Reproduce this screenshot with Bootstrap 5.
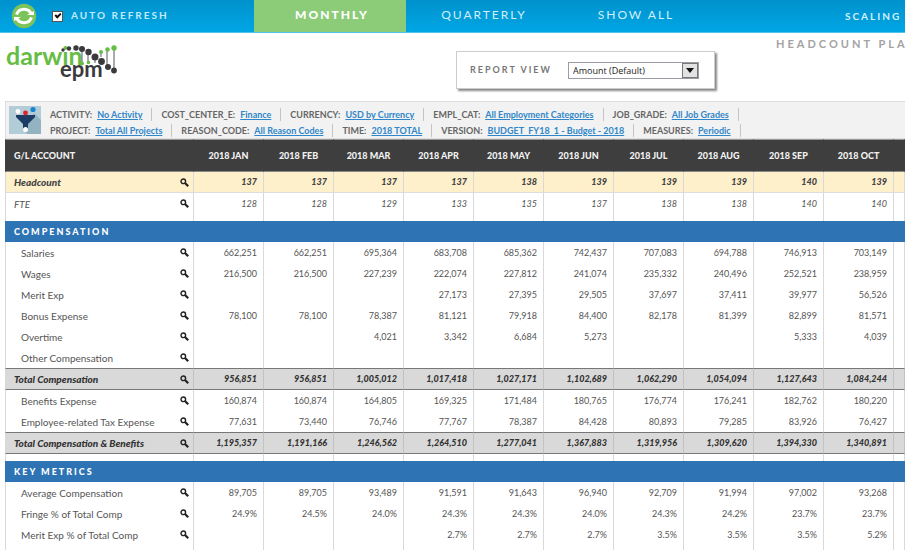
<!DOCTYPE html>
<html lang="en">
<head>
<meta charset="utf-8">
<meta name="viewport" content="width=device-width, initial-scale=1">
<title>Headcount Planning</title>
<link href="https://cdn.jsdelivr.net/npm/bootstrap@5.3.0/dist/css/bootstrap.min.css" rel="stylesheet">
<style>
body{font-family:"Century Gothic",Lato,"Liberation Sans",sans-serif;font-size:10px;line-height:16px;color:#555;overflow:hidden}
.topbar{height:33px;background:linear-gradient(#0092cd,#00a6e4);border-bottom:1px solid #4fc1ee}
.topbar-start{flex:0 0 254px;padding-left:11px;gap:15px}
.refresh-label{font-size:10px;letter-spacing:2px;color:#c3eafa;font-weight:700;padding-bottom:3px}
.tick{appearance:none;width:11px;height:11px;margin:0;border:1px solid #555;background:#fff;display:grid;place-items:center}
.tick:checked::after{content:"";width:6px;height:4px;border:solid #111;border-width:0 0 2px 2px;transform:rotate(-45deg);margin-top:-2px}
.tab-link{flex:0 0 152px;font-size:12px;letter-spacing:2px;color:#d2effa;text-decoration:none;padding:0 0 2px 4px}
.tab-link.active{background:#8ccb78;color:#fff;font-weight:900}
.scaling{margin-left:135px;font-size:10px;letter-spacing:2px;color:#d2effa;padding-bottom:1px;font-weight:700}
.masthead{height:68px}
.brand-art{margin:6px 0 0 5px}
.report-box{margin:18px 0 0 338px;height:38px;width:259px;border:1px solid #ccc;box-shadow:2px 2px 2px #888;padding:0 15px 0 13px}
.report-label{font-size:9px;letter-spacing:2px;font-weight:700;color:#777}
.view-wrap{width:131px;height:17px;border:1px solid #9a9da3}
.view-select{appearance:none;border:0;padding:0 0 0 4px;font:9px/15px "Open Sans",sans-serif;color:#222;background:#fff}
.view-arrow{width:16px;border:1px solid #777;background:#e2e2e2;pointer-events:none}
.page-name{margin:4px 0 0 61px;font-size:11px;letter-spacing:3px;font-weight:700;color:#a3a3a3}
.filterbar{margin-left:5px;height:38px;border:1px solid #ddd;border-right:0;background:#f2f2f2;padding:4px 0 0 3px;gap:9px}
.filter-line{height:16px;align-items:center}
.filter-item{padding-right:9px;margin-right:9px;border-right:1px solid #c4c4c4;line-height:13px;gap:5px;color:#666;font-size:9px;font-weight:700}
.filter-item a{color:#2f86c9;text-decoration:underline}
.ledger{margin-left:5px}
.ledger table{table-layout:fixed;border-collapse:separate;border-spacing:0}
.ledger th,.ledger td{height:21px;padding:0;border:0 solid #d9d9d9;border-right-width:1px;white-space:nowrap;vertical-align:middle;line-height:12px}
.ledger th:first-child{border-left-width:1px}
.ledger .c-name{width:189px}.ledger .c-month{width:70px}
.ledger td{font-size:9px;text-align:right;padding-right:6px}
.ledger tbody th{font-weight:400;padding:0 3px 0 15px}
.ledger thead th{height:33px;background:#3e3e3e;color:#f2f2f2;border-color:#3e3e3e;border-bottom:1px solid #888;border-top:1px solid #999;text-align:center;font-size:9px;font-weight:900}
.ledger thead th:first-child{text-align:left;padding-left:8px}
.ledger .kpi>*,.ledger .kpi-light>*{font-style:italic;border-bottom:1px solid #ddd}
.ledger .kpi-light>*{border-bottom:0}
.ledger .kpi>*{background:#fff0cc;font-weight:900;color:#444}
.ledger .kpi th,.ledger .kpi-light th,.ledger .sum th{padding-left:8px}
.ledger .sum>*{height:22px;background:#d9d9d9;font-style:italic;font-weight:900;color:#333;border-top:1px solid #777;border-bottom:1px solid #777;border-right-color:#c2c2c2}
.ledger .spacer>*{height:7px;line-height:0}
.ledger .band th{background:#2e74b5;color:#fff;font-size:9px;font-weight:900;letter-spacing:2px;padding-left:8px;border-color:#2e74b5}
.lens{width:10px;height:12px;color:#222}
.lens svg{width:9px;height:9px;display:block}
</style>
</head>
<body class="bg-white">
<svg width="0" height="0" class="d-none"><symbol id="lens" viewBox="0 0 9 9"><circle cx="3.3" cy="3.3" r="2.3" fill="none" stroke="currentColor" stroke-width="1.4"/><path d="M5 5L8.2 8.2" stroke="currentColor" stroke-width="2.2"/></symbol></svg>
<header>
<nav class="topbar d-flex align-items-stretch overflow-hidden text-nowrap">
  <div class="topbar-start d-flex align-items-center">
    <button class="btn p-0 border-0 d-flex rounded-circle" aria-label="Refresh"><svg width="26" height="26" viewBox="0 0 26 26"><circle cx="13" cy="13" r="12.2" fill="#7cc35b"/><g fill="none" stroke="#fff" stroke-width="3"><path d="M5.500 11.500A8 8 0 0 1 20.500 11.500"/><path d="M20.500 14.500A8 8 0 0 1 5.500 14.500"/></g><path d="M16 12h7V8zM10 14H3v4z" fill="#fff"/></svg></button>
    <div class="d-flex align-items-center gap-2"><input class="tick" type="checkbox" id="auto" checked><label class="refresh-label" for="auto">AUTO REFRESH</label></div>
  </div>
  <a class="tab-link active d-flex align-items-center justify-content-center" href="#">MONTHLY</a>
  <a class="tab-link d-flex align-items-center justify-content-center" href="#">QUARTERLY</a>
  <a class="tab-link d-flex align-items-center justify-content-center" href="#">SHOW ALL</a>
  <span class="scaling d-flex align-items-center">SCALING</span>
</nav>
<div class="masthead d-flex align-items-start overflow-hidden text-nowrap">
  <svg class="brand-art flex-shrink-0" width="113" height="48" viewBox="0 -2 113 48" role="img" aria-label="darwin epm">
    <g font-family="Century Gothic, Lato, sans-serif" font-weight="700"><text x="1" y="24" font-size="25" fill="#65bd45">darwin</text><text x="55" y="36" font-size="22" fill="#3a3a3c">epm</text></g>
    <g stroke="#55585a"><path d="M77 10V22M83 10V22M90 14V22M96 11V16M102 8V27M109 7V30"/></g>
    <g fill="#3a3a3c"><circle cx="58" cy="9" r="1.7"/><circle cx="64" cy="7.500" r="2.200"/><circle cx="71" cy="7" r="2.700"/><circle cx="77" cy="8" r="3"/><circle cx="83.500" cy="11" r="3.200"/><circle cx="90" cy="16" r="3.500"/><circle cx="96.500" cy="20.500" r="3.400"/><circle cx="103" cy="26" r="3"/><circle cx="109" cy="29.500" r="2.900"/></g>
    <g fill="#65bd45"><circle cx="77" cy="22.500" r="2"/><circle cx="83.500" cy="21.500" r="1.800"/><circle cx="96" cy="11" r="2"/><circle cx="102.500" cy="8.500" r="2.300"/><circle cx="109" cy="7" r="2.700"/></g>
  </svg>
  <div class="report-box d-flex align-items-center justify-content-between flex-shrink-0">
    <label class="report-label" for="view">REPORT VIEW</label>
    <div class="view-wrap d-flex"><select class="view-select flex-grow-1" id="view"><option>Amount (Default)</option></select><span class="view-arrow d-flex align-items-center justify-content-center"><svg width="8" height="5" viewBox="0 0 8 5"><path d="M0 0h8L4 5z" fill="#111"/></svg></span></div>
  </div>
  <h1 class="page-name">HEADCOUNT PLA</h1>
</div>
</header>
<main>
<section class="filterbar d-flex align-items-start overflow-hidden text-nowrap">
  <svg class="flex-shrink-0" width="32" height="28" viewBox="0 0 32 28"><path fill="#b3cdd8" d="M0 0h32v28H0z"/><path fill="#93b3c2" d="M25 7l7 7v14H18l-2-3z"/><path fill="#1d3c63" d="M7 9h19v2l-7 7v5h-5v-5L7 11z"/><circle cx="9" cy="5.500" r="2.400" fill="#fff"/><circle cx="16.500" cy="7" r="2.400" fill="#d9262c"/><circle cx="24" cy="3.500" r="2.600" fill="#1684d0"/><circle cx="16.500" cy="23.500" r="2.500" fill="#fff"/></svg>
  <div>
    <div class="filter-line d-flex">
      <span class="filter-item d-flex">ACTIVITY: <a href="#">No Activity</a></span><span class="filter-item d-flex">COST_CENTER_E: <a href="#">Finance</a></span><span class="filter-item d-flex">CURRENCY: <a href="#">USD by Currency</a></span><span class="filter-item d-flex">EMPL_CAT: <a href="#">All Employment Categories</a></span><span class="filter-item d-flex">JOB_GRADE: <a href="#">All Job Grades</a></span>
    </div>
    <div class="filter-line d-flex">
      <span class="filter-item d-flex">PROJECT: <a href="#">Total All Projects</a></span><span class="filter-item d-flex">REASON_CODE: <a href="#">All Reason Codes</a></span><span class="filter-item d-flex">TIME: <a href="#">2018 TOTAL</a></span><span class="filter-item d-flex">VERSION: <a href="#">BUDGET_FY18_1 - Budget - 2018</a></span><span class="filter-item d-flex">MEASURES: <a href="#">Periodic</a></span>
    </div>
  </div>
</section>
<div class="ledger">
<table class="w-100">
<colgroup><col class="c-name"><col class="c-month" span="10"><col></colgroup>
<thead><tr><th scope="col">G/L ACCOUNT</th><th scope="col">2018 JAN</th><th scope="col">2018 FEB</th><th scope="col">2018 MAR</th><th scope="col">2018 APR</th><th scope="col">2018 MAY</th><th scope="col">2018 JUN</th><th scope="col">2018 JUL</th><th scope="col">2018 AUG</th><th scope="col">2018 SEP</th><th scope="col">2018 OCT</th><th></th></tr></thead>
<tbody id="rows"></tbody>
</table>
</div>
</main>
<script>
// kind | label | ten monthly values
const rows = [
 'kpi|Headcount|137 137 137 137 138 139 139 139 140 139',
 'kpi-light|FTE|128 128 129 133 135 137 138 138 140 140',
 'spacer','band|COMPENSATION',
 'line|Salaries|662,251 662,251 695,364 683,708 685,362 742,437 707,083 694,788 746,913 703,149',
 'line|Wages|216,500 216,500 227,239 222,074 227,812 241,074 235,332 240,496 252,521 238,959',
 'line|Merit Exp|- - - 27,173 27,395 29,505 37,697 37,411 39,977 56,526',
 'line|Bonus Expense|78,100 78,100 78,387 81,121 79,918 84,400 82,178 81,399 82,899 81,571',
 'line|Overtime|- - 4,021 3,342 6,684 5,273 - - 5,333 4,039',
 'line|Other Compensation|- - - - - - - - - -',
 'sum|Total Compensation|956,851 956,851 1,005,012 1,017,418 1,027,171 1,102,689 1,062,290 1,054,094 1,127,643 1,084,244',
 'line|Benefits Expense|160,874 160,874 164,805 169,325 171,484 180,765 176,774 176,241 182,762 180,220',
 'line|Employee-related Tax Expense|77,631 73,440 76,746 77,767 78,387 84,428 80,893 79,285 83,926 76,427',
 'sum|Total Compensation &amp; Benefits|1,195,357 1,191,166 1,246,562 1,264,510 1,277,041 1,367,883 1,319,956 1,309,620 1,394,330 1,340,891',
 'spacer','band|KEY METRICS',
 'line|Average Compensation|89,705 89,705 93,489 91,591 91,643 96,940 92,709 91,994 97,002 93,268',
 'line|Fringe % of Total Comp|24.9% 24.5% 24.0% 24.3% 24.3% 24.0% 24.3% 24.2% 23.7% 23.7%',
 'line|Merit Exp % of Total Comp|- - - 2.7% 2.7% 2.7% 3.5% 3.5% 3.5% 5.2%',
 'spacer'];
document.getElementById('rows').innerHTML = rows.map(r => {
  const [kind, label, vals] = r.split('|');
  if (kind === 'band') return `<tr class="band"><th colspan="12" scope="rowgroup">${label}</th></tr>`;
  if (kind === 'spacer') return `<tr class="spacer"><th></th>${'<td></td>'.repeat(11)}</tr>`;
  const cells = vals.split(' ').map(v => `<td>${v === '-' ? '' : v}</td>`).join('');
  return `<tr class="${kind}"><th scope="row"><div class="d-flex justify-content-between align-items-center">${label}<button class="btn p-0 border-0 lens" aria-label="Details"><svg><use href="#lens"/></svg></button></div></th>${cells}<td></td></tr>`;
}).join('');
</script>
<script src="https://cdn.jsdelivr.net/npm/bootstrap@5.3.0/dist/js/bootstrap.bundle.min.js"></script>
</body>
</html>
